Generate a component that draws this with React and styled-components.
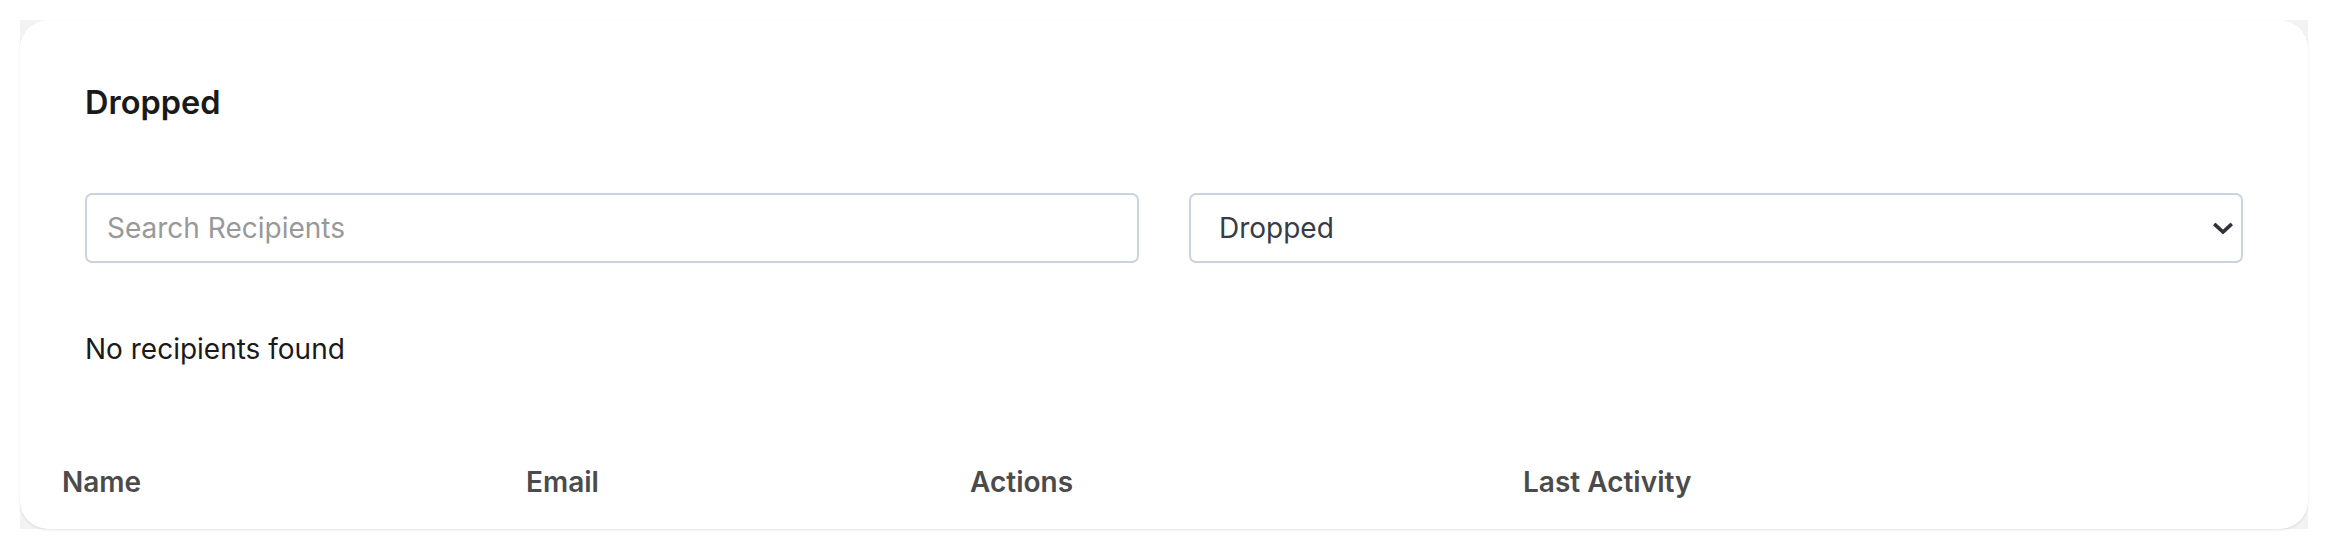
import React from "react";
import styled, { createGlobalStyle } from "styled-components";

const Global = createGlobalStyle`
  html, body { margin: 0; padding: 0; background: #ffffff; }
  body { font-family: Inter, "Noto Sans", sans-serif; }
  * { box-sizing: border-box; }
`;

const Page = styled.div`
  padding: 20px 20px 21px 20px;
`;

const Backdrop = styled.div`
  background: #f3f3f3;
`;

const Card = styled.section`
  background: #ffffff;
  border-radius: 28px;
  box-shadow: 0 1px 3px rgba(0, 0, 0, 0.08), 0 1px 2px rgba(0, 0, 0, 0.04);
  padding: 63px 0 27px 0;
  overflow: hidden;
`;

const Body = styled.div`
  padding: 0 65px;
`;

const Title = styled.h2`
  margin: 0 0 70px 0;
  font-size: 32.5px;
  line-height: 40px;
  font-weight: 600;
  color: #1a1a1a;
`;

const Filters = styled.div`
  display: grid;
  grid-template-columns: 1fr 1fr;
  gap: 50px;
`;

const fieldBase = `
  width: 100%;
  height: 70px;
  border: 2px solid #cbd3de;
  border-radius: 7px;
  background: #ffffff;
  font-family: Inter, "Noto Sans", sans-serif;
  font-size: 28px;
  outline: none;
  margin: 0;
`;

const SearchInput = styled.input`
  ${fieldBase}
  padding: 0 20px;
  color: #1a1a1a;
  &::placeholder { color: #999999; }
`;

const SelectWrap = styled.div`
  position: relative;
`;

const Select = styled.select`
  ${fieldBase}
  appearance: none;
  -webkit-appearance: none;
  padding: 0 60px 0 28px;
  color: #363b44;
`;

const Chevron = styled.svg`
  position: absolute;
  right: 10px;
  top: 50%;
  width: 20px;
  height: 12px;
  transform: translateY(-45%);
  pointer-events: none;
`;

const Empty = styled.p`
  margin: 66px 0 93px 0;
  font-size: 28px;
  line-height: 40px;
  color: #1a1a1a;
`;

const TableHead = styled.div`
  display: grid;
  grid-template-columns: 464px 444px 553px 1fr;
  padding-left: 20px;
`;

const HeadCell = styled.div`
  padding-left: 22px;
  font-size: 28px;
  line-height: 40px;
  font-weight: 600;
  color: #4b4b4b;
  white-space: nowrap;
`;

export default function App() {
  return (
    <>
      <Global />
      <Page>
        <Backdrop>
          <Card>
            <Body>
              <Title>Dropped</Title>
              <Filters>
                <SearchInput placeholder="Search Recipients" />
                <SelectWrap>
                  <Select defaultValue="dropped">
                    <option value="all">All</option>
                    <option value="delivered">Delivered</option>
                    <option value="bounced">Bounced</option>
                    <option value="dropped">Dropped</option>
                  </Select>
                  <Chevron viewBox="0 0 20 12">
                    <path
                      d="M2.5 2.5 L10 9.5 L17.5 2.5"
                      fill="none"
                      stroke="#2f343c"
                      strokeWidth="3.6"
                      strokeLinecap="square"
                    />
                  </Chevron>
                </SelectWrap>
              </Filters>
              <Empty>No recipients found</Empty>
            </Body>
            <TableHead>
              <HeadCell>Name</HeadCell>
              <HeadCell>Email</HeadCell>
              <HeadCell>Actions</HeadCell>
              <HeadCell>Last Activity</HeadCell>
            </TableHead>
          </Card>
        </Backdrop>
      </Page>
    </>
  );
}
